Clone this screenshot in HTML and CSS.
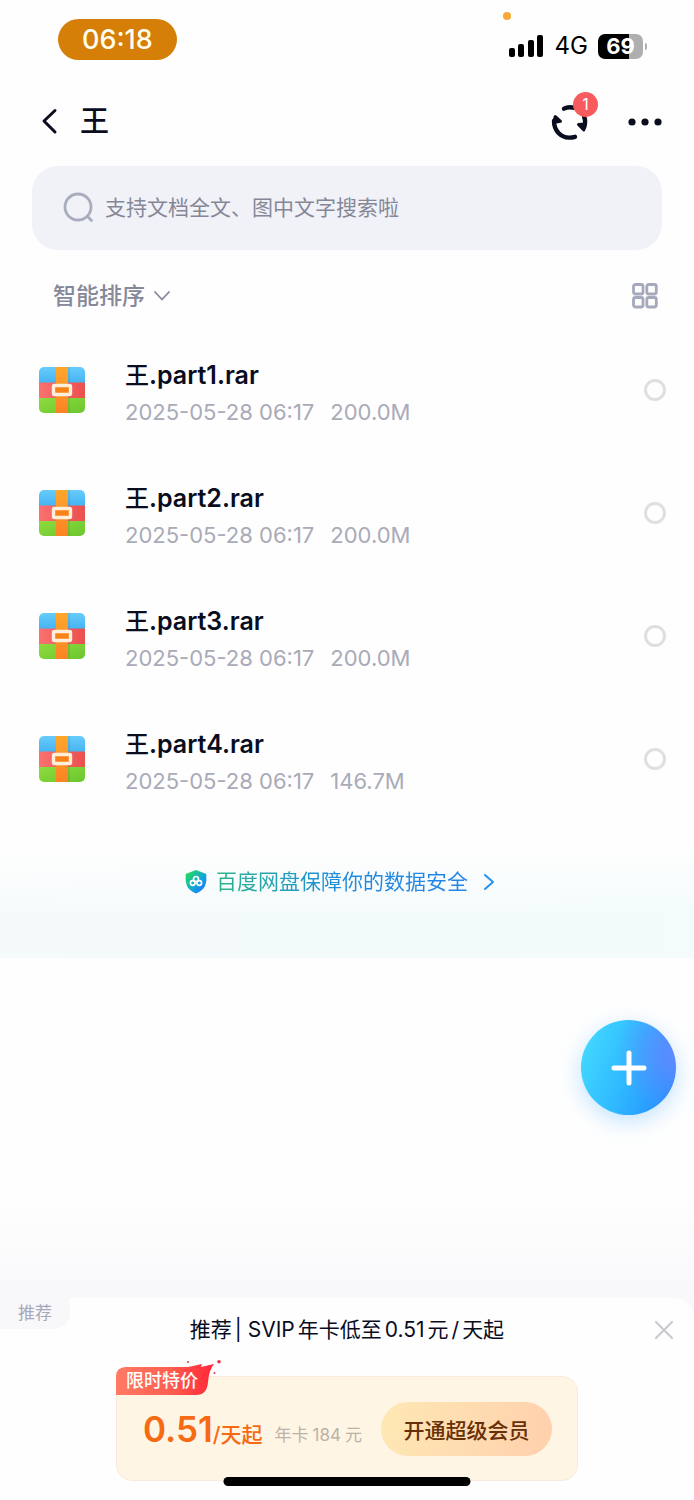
FILE: index.html
```html
<!DOCTYPE html>
<html lang="zh-CN">
<head>
<meta charset="utf-8">
<meta name="viewport" content="width=device-width, initial-scale=1">
<title>王</title>
<link rel="stylesheet" href="styles.css">
</head>
<body>
<svg class="defs" aria-hidden="true">
  <defs>
    <linearGradient id="sky" x1="0" y1="0" x2="0" y2="1"><stop offset="0" stop-color="#68cbfb"/><stop offset="1" stop-color="#44b4f2"/></linearGradient>
    <linearGradient id="rose" x1="0" y1="0" x2="1" y2="0"><stop offset="0" stop-color="#fb7070"/><stop offset="1" stop-color="#ea504e"/></linearGradient>
    <linearGradient id="leaf" x1="0" y1="0" x2="1" y2="1"><stop offset="0" stop-color="#8edb3d"/><stop offset="1" stop-color="#6bc62f"/></linearGradient>
    <linearGradient id="strap" x1="0" y1="0" x2="0" y2="1"><stop offset="0" stop-color="#ffa62c"/><stop offset="1" stop-color="#fb8323"/></linearGradient>
    <linearGradient id="shield" x1="0" y1="0" x2="1" y2="1"><stop offset="0.15" stop-color="#22d568"/><stop offset="0.55" stop-color="#12a9d5"/><stop offset="0.85" stop-color="#187cff"/></linearGradient>
    <linearGradient id="flame" x1="0" y1="0" x2="1" y2="0"><stop offset="0" stop-color="#ff7a64"/><stop offset="0.55" stop-color="#ff5f50"/><stop offset="1" stop-color="#ff2638"/></linearGradient>
    <clipPath id="box"><rect width="46" height="46" rx="5"/></clipPath>
    <symbol id="rar" viewBox="0 0 46 46">
      <g clip-path="url(#box)">
        <rect width="46" height="16" fill="url(#sky)"/>
        <rect y="15.5" width="46" height="15.500" fill="url(#rose)"/>
        <rect y="31" width="46" height="15" fill="url(#leaf)"/>
        <rect x="29" width="2" height="46" fill="#2b4b40" opacity=".12"/>
        <rect x="17" width="12" height="46" fill="url(#strap)"/>
      </g>
      <rect x="14.500" y="18.500" width="17" height="9" rx="1" fill="#f98217" stroke="#ffeedb" stroke-width="3.400"/>
    </symbol>
  </defs>
</svg>

<div class="status">
  <time class="clock">06:18</time>
  <i class="mic-dot"></i>
  <div class="signals">
    <svg width="36" height="22" viewBox="0 0 36 22"><rect x="0" y="13" width="6" height="9" rx="2"/><rect x="9" y="9" width="6" height="13" rx="2"/><rect x="19" y="5" width="6" height="17" rx="2"/><rect x="28" y="0" width="6" height="22" rx="2"/></svg>
    <span>4G</span>
    <div class="battery"><b>69</b></div>
  </div>
</div>

<header class="topbar">
  <button class="plain" aria-label="返回"><svg width="18" height="28" viewBox="0 0 18 28" fill="none" stroke="#090d1e" stroke-width="3" stroke-linecap="round" stroke-linejoin="round"><path d="M15 2.500 4 13 15 24"/></svg></button>
  <h1>王</h1>
  <button class="plain transfer" aria-label="传输列表">
    <svg width="38" height="38" viewBox="0 0 38 38" fill="none" stroke="#090d1e" stroke-width="4.400" stroke-linecap="round">
      <path d="M14 5.600Q18.500 3.200 25 5"/>
      <path d="M34.200 14Q36 18 34.200 24"/>
      <path d="M4 18C4 28 11 34.300 19 34.600Q22 34.700 25 33.800"/>
      <path d="M5.300 13.500 3.500 19.500 10.500 18.300Z" fill="#090d1e" stroke-width="3" stroke-linejoin="round"/>
      <path d="M28.500 21.500 35.200 21 33.800 27Z" fill="#090d1e" stroke-width="3" stroke-linejoin="round"/>
    </svg>
    <span class="count">1</span>
  </button>
  <button class="plain more" aria-label="更多"><svg width="34" height="8" viewBox="0 0 34 8" fill="#090d1e"><circle cx="4" cy="4" r="3.600"/><circle cx="17" cy="4" r="3.600"/><circle cx="30" cy="4" r="3.600"/></svg></button>
</header>

<main>
  <label class="search">
    <svg width="32" height="32" viewBox="0 0 32 32" fill="none" stroke="#a8adbd" stroke-width="2.800" stroke-linecap="round"><circle cx="15" cy="15" r="13"/><path d="m24.500 24.500 4 4"/></svg>
    <input type="search" placeholder="支持文档全文、图中文字搜索啦" aria-label="搜索">
  </label>

  <div class="tools">
    <button class="plain sort">智能排序<svg width="18" height="12" viewBox="0 0 18 12" fill="none" stroke="#858999" stroke-width="1.800" stroke-linecap="round" stroke-linejoin="round"><path d="m2 2 7 7.500L16 2"/></svg></button>
    <button class="plain" aria-label="网格视图"><svg width="26" height="26" viewBox="0 0 26 26" fill="none" stroke="#a6a9bb" stroke-width="2.800"><rect x="1.500" y="1.500" width="9.500" height="9.500" rx="2"/><rect x="14.800" y="1.500" width="9.500" height="9.500" rx="2"/><rect x="1.500" y="14.500" width="9.500" height="9.500" rx="2"/><rect x="14.800" y="14.500" width="9.500" height="9.500" rx="2"/></svg></button>
  </div>

  <ul class="files">
    <li><svg class="rar"><use href="#rar"/></svg><label for="f1"><strong><span>王</span>.part1.rar</strong><span class="meta"><span>2025-05-28 06:17</span><span>200.0M</span></span></label><input type="checkbox" id="f1"></li>
    <li><svg class="rar"><use href="#rar"/></svg><label for="f2"><strong><span>王</span>.part2.rar</strong><span class="meta"><span>2025-05-28 06:17</span><span>200.0M</span></span></label><input type="checkbox" id="f2"></li>
    <li><svg class="rar"><use href="#rar"/></svg><label for="f3"><strong><span>王</span>.part3.rar</strong><span class="meta"><span>2025-05-28 06:17</span><span>200.0M</span></span></label><input type="checkbox" id="f3"></li>
    <li><svg class="rar"><use href="#rar"/></svg><label for="f4"><strong><span>王</span>.part4.rar</strong><span class="meta"><span>2025-05-28 06:17</span><span>146.7M</span></span></label><input type="checkbox" id="f4"></li>
  </ul>

  <a class="safety" href="#">
    <svg width="24" height="26" viewBox="0 0 24 26"><path d="M12 1 22.300 5Q23 12 21 17 18.500 22 12 24.500 5.500 22 3 17 1 12 1.700 5Z" fill="url(#shield)"/><g fill="none" stroke="#fff" stroke-width="1.700"><circle cx="12" cy="10" r="2.500"/><circle cx="8.700" cy="14" r="2.300"/><circle cx="15.300" cy="14" r="2.300"/></g></svg>
    <span>百度网盘保障你的数据安全</span>
    <svg width="12" height="18" viewBox="0 0 12 18" fill="none" stroke="#2492ef" stroke-width="2" stroke-linecap="round" stroke-linejoin="round"><path d="m2 2 8 7-8 7"/></svg>
  </a>
</main>

<footer class="promo">
  <button class="fab" aria-label="新建"><svg width="36" height="36" viewBox="0 0 36 36" stroke="#fff" stroke-width="5" stroke-linecap="round"><path d="M18 3v30M3 18h30"/></svg></button>
  <div class="sheet">
    <span class="tag">推荐</span>
    <div class="headline">
      <h2><span>推荐</span><span>| SVIP</span><span>年卡低至</span><span>0.51</span><span>元</span><span>/</span><span>天起</span></h2>
      <button class="plain close" aria-label="关闭"><svg width="20" height="20" viewBox="0 0 20 20" stroke="#c9cad0" stroke-width="2.200" stroke-linecap="round"><path d="m2 2 16 16M18 2 2 18"/></svg></button>
    </div>
    <div class="card">
      <div class="ribbon">
        <svg viewBox="0 0 106 36" width="106" height="36"><path d="M0 17Q0 7 10 7H72L86 4 85 7 98 4Q93 10 92 22 91 35 80 35H0Z" fill="url(#flame)"/><g fill="#ef3243"><circle cx="103" cy="1.800" r="1.800"/><circle cx="72" cy="2" r="1"/><circle cx="98.500" cy="13" r="1"/></g></svg>
        <span>限时特价</span>
      </div>
      <p class="price"><b>0.51</b><span>/天起</span></p>
      <small><span>年卡</span><span>184</span><span>元</span></small>
      <button class="join">开通超级会员</button>
    </div>
    <i class="home"></i>
  </div>
</footer>
</body>
</html>
```
FILE: styles.css
```css
* { box-sizing: border-box; }
body {
  margin: 0;
  min-height: 100vh;
  display: flex;
  flex-direction: column;
  background: #fefefe;
  color: #090d1e;
  font-family: Inter, "Noto Sans CJK SC", sans-serif;
}
h1, h2, p, ul { margin: 0; padding: 0; }
button { font: inherit; color: inherit; border: 0; cursor: pointer; }
svg { display: block; flex: none; }
.defs { position: absolute; width: 0; height: 0; }
.plain { background: none; padding: 0; display: flex; align-items: center; }

.status {
  position: relative;
  display: flex;
  justify-content: space-between;
  align-items: flex-start;
  padding: 19px 51px 0 58px;
  height: 80px;
}
.clock {
  padding: 0 24px;
  border-radius: 21px;
  background: #d67f08;
  color: #fffdf0;
  font-size: 27px;
  font-weight: 500;
  line-height: 41px;
}
.mic-dot {
  position: absolute;
  top: 12px;
  right: 183px;
  width: 8px;
  height: 8px;
  border-radius: 50%;
  background: #faa634;
}
.signals { display: flex; align-items: center; gap: 10px; margin-top: 12px; font-size: 24px; line-height: 30px; color: #000; }
.battery {
  position: relative;
  width: 45px;
  height: 25px;
  border-radius: 7px;
  background: linear-gradient(90deg, #000 69%, #afafaf 69%);
  color: #fff;
  font-size: 22px;
  line-height: 25px;
  text-align: center;
}
.battery::after {
  content: "";
  position: absolute;
  right: -4px;
  top: 9px;
  width: 2px;
  height: 7px;
  border-radius: 0 2px 2px 0;
  background: #afafaf;
}

.topbar { display: flex; align-items: center; height: 86px; padding: 0 32px 2px 40px; }
.topbar h1 { flex: 1; margin-left: 22px; font-size: 29px; line-height: 40px; font-weight: 500; }
.transfer { position: relative; margin-right: 40px; }
.count {
  position: absolute;
  top: -11px;
  right: -10px;
  width: 25px;
  border-radius: 50%;
  background: #f75b5d;
  color: #fff;
  font-size: 16px;
  line-height: 25px;
  text-align: center;
}

main { display: flex; flex-direction: column; }
.search {
  display: flex;
  align-items: center;
  gap: 10px;
  height: 84px;
  margin: 0 32px;
  padding: 0 31px;
  border-radius: 26px;
  background: #f1f1f8;
}
.search input {
  flex: 1;
  min-width: 0;
  padding: 0;
  border: 0;
  outline: 0;
  background: none;
  font: 21px/32px Inter, "Noto Sans CJK SC", sans-serif;
}
.search input::placeholder { color: #858797; opacity: 1; }
.tools { display: flex; justify-content: space-between; align-items: center; height: 78px; padding: 13px 36px 0 53px; }
.sort { gap: 8px; color: #858999; font-size: 23px; line-height: 32px; font-weight: 500; }

.files { list-style: none; }
.files li { display: flex; align-items: center; height: 123px; padding: 0 28px 0 39px; }
.rar { width: 46px; height: 46px; }
.files label { flex: 1; display: grid; gap: 2px; padding: 5px 0 0 40px; }
.files strong { font-size: 25px; line-height: 36px; font-weight: 600; }
.files strong span { font-size: 24px; font-weight: 500; }
.meta { display: flex; gap: 16px; color: #a9abb8; font-size: 22px; line-height: 32px; }
.files input {
  appearance: none;
  width: 22px;
  height: 22px;
  margin: 0;
  border: 3px solid #dfdfe3;
  border-radius: 50%;
}
.files input:checked { background: #349bff; }

.safety {
  display: flex;
  justify-content: center;
  gap: 8px;
  align-items: center;
  height: 138px;
  padding: 0 15px 14px 0;
  background: linear-gradient(#fefefe 20%, #fefefe00 70%), linear-gradient(100deg, #f5fafb, #f3fbfb);
  font-size: 21px;
  line-height: 32px;
  text-decoration: none;
}
.safety span { color: transparent; background: linear-gradient(90deg, #2bb58b, #1f8cdd 48%, #2583e8); background-clip: text; margin-right: 7px; }

.promo { position: relative; margin-top: auto; padding-top: 98px; background: linear-gradient(#f8f8fb00, #f8f8fb 98px); }
.fab {
  position: absolute;
  right: 18px;
  bottom: 385px;
  display: grid;
  place-items: center;
  width: 95px;
  height: 95px;
  padding: 0;
  border-radius: 50%;
  background: radial-gradient(circle at 105% 35%, #6488ff, #6488ff00 55%), linear-gradient(110deg, #43dbff 5%, #2fb8ff 50%, #238cff 95%);
  box-shadow: 0 6px 22px #64baff66;
}
.sheet { position: relative; padding: 14px 0 19px; border-radius: 0 20px 0 0; background: #fefefe; }
.tag {
  position: absolute;
  top: 0;
  left: 0;
  padding: 0 18px;
  border-radius: 0 0 16px 0;
  background: #f8f8fb;
  color: #a6a8b8;
  font-size: 17px;
  line-height: 31px;
}
.headline { display: grid; grid-template-columns: 1fr auto 1fr; align-items: center; }
.headline h2 { grid-column: 2; display: flex; gap: 3px; font-size: 21px; line-height: 36px; font-weight: 400; white-space: nowrap; }
.close { justify-self: end; margin-right: 20px; }
.card {
  position: relative;
  display: flex;
  align-items: center;
  height: 105px;
  margin: 28px 116px 0;
  padding: 0 25px 0 26px;
  border: 1px solid #fbeadb;
  border-radius: 16px;
  background: #fff5e5;
}
.ribbon { position: absolute; top: -17px; left: -1px; color: #fff; font-size: 18px; line-height: 26px; font-weight: 500; }
.ribbon span { position: absolute; top: 8px; left: 10px; white-space: nowrap; }
.price { margin-top: 6px; color: #f56a12; font-size: 21px; line-height: 44px; font-weight: 500; white-space: nowrap; }
.price b { font-size: 35px; font-weight: 600; }
.card small { display: flex; gap: 4px; margin: 12px 0 0 12px; color: #bcb2a6; font-size: 17px; line-height: 28px; white-space: nowrap; }
.join {
  width: 171px;
  height: 54px;
  margin-left: auto;
  padding: 0;
  border-radius: 27px;
  background: linear-gradient(100deg, #fee8b4, #ffd0ad);
  color: #673008;
  font-size: 21px;
  font-weight: 500;
  white-space: nowrap;
}
.home { position: absolute; left: 50%; bottom: 14px; width: 247px; height: 9px; border-radius: 5px; background: #000; transform: translateX(-50%); }
```
